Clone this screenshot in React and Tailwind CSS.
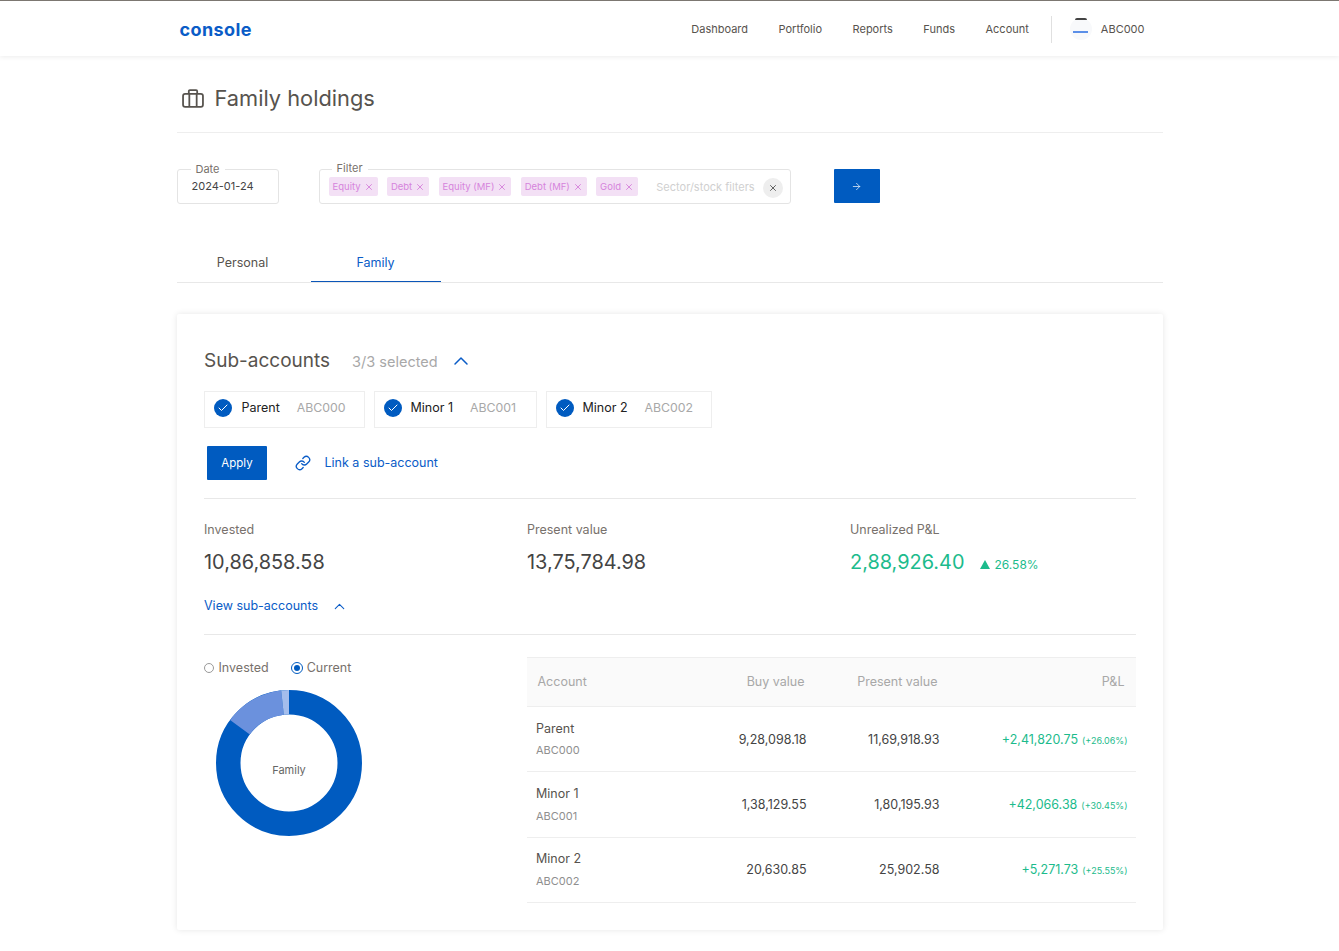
import { ArrowRight, Check, ChevronUp, Link as LinkIcon, X } from "lucide-react";

const navLinks = [
  { label: "Dashboard", cls: "mr-[30.5px]" },
  { label: "Portfolio", cls: "mr-[30.5px]" },
  { label: "Reports", cls: "mr-[30.5px]" },
  { label: "Funds", cls: "mr-[30.5px]" },
  { label: "Account", cls: "" },
];

const filters = ["Equity", "Debt", "Equity (MF)", "Debt (MF)", "Gold"];

const subAccounts = [
  { name: "Parent", id: "ABC000", cls: "w-[161px] mr-[9px]", textCls: "ml-[10px] gap-[17px]" },
  { name: "Minor 1", id: "ABC001", cls: "w-[163px] mr-[9px]", textCls: "ml-[9px] gap-[17px]" },
  { name: "Minor 2", id: "ABC002", cls: "w-[166px]", textCls: "ml-[9px] gap-[17px]" },
];

const rows = [
  { name: "Parent", id: "ABC000", buy: "9,28,098.18", present: "11,69,918.93", pl: "+2,41,820.75", pct: "(+26.06%)" },
  { name: "Minor 1", id: "ABC001", buy: "1,38,129.55", present: "1,80,195.93", pl: "+42,066.38", pct: "(+30.45%)" },
  { name: "Minor 2", id: "ABC002", buy: "20,630.85", present: "25,902.58", pl: "+5,271.73", pct: "(+25.55%)" },
];

const Header = () => (
  <header className="h-[56px] border-t border-[#7c7771] bg-white shadow-[0_1px_5px_rgba(0,0,0,0.08)]">
    <div className="w-[986px] mx-auto h-full flex items-center justify-between">
      <div className="ml-[3px] mt-[2px] text-[#0a5cc7] text-[18px] font-bold tracking-[0.4px] leading-none">console</div>
      <div className="flex items-center mr-[18px] mt-[1px]">
        {navLinks.map((l) => (
          <span key={l.label} className={`text-[11px] text-[#57534e] ${l.cls}`}>
            {l.label}
          </span>
        ))}
        <div className="w-px h-[27px] bg-[#e0e0e0] ml-[22px] mr-[18px]" />
        <div className="relative w-[22px] h-[22px] mr-[9px] rounded-full bg-[#f8f9fb]">
          <div className="absolute left-[5px] top-[0px] w-[12px] h-[2px] rounded-t-full bg-[#444]" />
          <div className="absolute left-[3px] top-[13px] w-[15px] h-[2px] bg-[#5b8fe8]" />
        </div>
        <span className="text-[11px] text-[#57534e]">ABC000</span>
      </div>
    </div>
  </header>
);

const Fieldset = ({ label, cls, labelCls, children }) => (
  <div className={`relative h-[35px] border border-[#e4e4e4] rounded-[3px] ${cls}`}>
    <span className={`absolute bg-white px-[5px] text-[11px] leading-[12px] text-[#78716c] ${labelCls}`}>{label}</span>
    {children}
  </div>
);

const Filters = () => (
  <div className="flex items-start mt-[36px]">
    <Fieldset label="Date" cls="w-[102px] flex items-center pl-[14px]" labelCls="left-[13px] top-[-7px]">
      <span className="text-[11px] text-[#444]">2024-01-24</span>
    </Fieldset>
    <Fieldset label="Filter" cls="w-[472px] ml-[40px] flex items-center pl-[9px]" labelCls="left-[12px] top-[-8px]">
      {filters.map((f) => (
        <span key={f} className="flex items-center h-[19px] mr-[9.3px] px-[4px] gap-[3px] rounded-[2px] bg-[#f3e0f5] text-[9.5px] text-[#d684dc]">
          <span className="pt-[2px]">{f}</span>
          <X size={10} strokeWidth={2.25} />
        </span>
      ))}
      <span className="ml-[9px] pt-[1px] text-[11px] text-[#d0d0d0]">Sector/stock filters</span>
      <span className="absolute right-[7px] top-[8px] w-[20px] h-[20px] rounded-full bg-[#eeeeee] flex items-center justify-center text-[#444]">
        <X size={10} strokeWidth={2} />
      </span>
    </Fieldset>
    <button className="ml-[43px] w-[46px] h-[34px] bg-[#005bc0] rounded-[1px] flex items-center justify-center text-white">
      <ArrowRight size={11} strokeWidth={1.5} />
    </button>
  </div>
);

const Tabs = () => (
  <div className="flex mt-[34px] h-[45px] border-b border-[#e8e8e8]">
    <div className="w-[132px] mr-[2px] pt-[6px] flex items-center justify-center text-[12.5px] text-[#57534e]">Personal</div>
    <div className="w-[130px] pt-[8px] border-b border-[#0b56b8] flex items-center justify-center text-[12.5px] text-[#0a5cc7]">Family</div>
  </div>
);

const SubAccountChip = ({ a }) => (
  <div className={`h-[37px] border border-[#eeeeee] flex items-center pl-[9px] pb-[3px] ${a.cls}`}>
    <span className="w-[18px] h-[18px] rounded-full bg-[#005bc0] flex items-center justify-center text-white">
      <Check size={12} strokeWidth={2} />
    </span>
    <span className={`flex items-center ${a.textCls}`}>
      <span className="text-[12.5px] text-[#222]">{a.name}</span>
      <span className="text-[12.3px] text-[#a8a8a8]">{a.id}</span>
    </span>
  </div>
);

const Stat = ({ label, value, children, valueCls = "text-[#444]" }) => (
  <div className="w-[323px] shrink-0 pl-[0.5px]">
    <div className="text-[12.5px] text-[#78716c] leading-[16px]">{label}</div>
    <div className="flex items-center mt-[12px]">
      <span className={`text-[19.9px] leading-[24px] ${valueCls}`}>{value}</span>
      {children}
    </div>
  </div>
);

const Donut = () => (
  <svg width="146" height="146" viewBox="0 0 146 146" className="block -rotate-90">
    <circle cx="73" cy="73" r="60.75" fill="none" stroke="#005bc0" strokeWidth="24.5" />
    <circle cx="73" cy="73" r="60.75" fill="none" stroke="#6b91dd" strokeWidth="24.5" strokeDasharray="50.4 331.3" strokeDashoffset="-324.1" />
    <circle cx="73" cy="73" r="60.75" fill="none" stroke="#a4bdec" strokeWidth="24.5" strokeDasharray="7.2 374.5" strokeDashoffset="-374.5" />
  </svg>
);

const ChartPanel = () => (
  <div className="w-[323px] shrink-0 pt-[24px]">
    <div className="flex items-center text-[12.5px] text-[#78716c] leading-[18px]">
      <span className="w-[10px] h-[10px] rounded-full border border-[#9a9a9a]" />
      <span className="ml-[5px]">Invested</span>
      <span className="ml-[22px] w-[12px] h-[12px] rounded-full border-[1.5px] border-[#005bc0] flex items-center justify-center">
        <span className="w-[6px] h-[6px] rounded-full bg-[#005bc0]" />
      </span>
      <span className="ml-[4px]">Current</span>
    </div>
    <div className="relative w-[146px] ml-[12px] mt-[13px]">
      <Donut />
      <span className="absolute inset-0 pt-[14px] pl-[1px] flex items-center justify-center text-[11px] text-[#666]">Family</span>
    </div>
  </div>
);

const HoldingsTable = () => (
  <div className="flex-1 pt-[22px]">
    <div className="h-[50px] pt-[1px] bg-[#fafafa] border-t border-b border-[#eeeeee] flex items-center text-[12.5px] text-[#a8a8a8]">
      <span className="w-[145px] pl-[11px]">Account</span>
      <span className="w-[133px] text-right">Buy value</span>
      <span className="w-[133px] text-right">Present value</span>
      <span className="flex-1 text-right pr-[11px]">P&amp;L</span>
    </div>
    {rows.map((r) => (
      <div key={r.name} className="h-[65.3px] border-b border-[#eeeeee] flex items-center text-[12.5px] text-[#444]">
        <div className="w-[145px] pl-[9.5px]">
          <div className="text-[#57534e] leading-[16px]">{r.name}</div>
          <div className="text-[11px] text-[#8f8f8f] leading-[14px] mt-[6.5px]">{r.id}</div>
        </div>
        <span className="w-[135px] pt-[2px] text-right">{r.buy}</span>
        <span className="w-[133px] pt-[2px] text-right">{r.present}</span>
        <span className="flex-1 pt-[2px] flex items-baseline justify-end pr-[8px] text-[#1cbb8c]">
          {r.pl}
          <span className="ml-[4px] text-[9px]">{r.pct}</span>
        </span>
      </div>
    ))}
  </div>
);

const App = () => (
  <div className="min-h-[951px] bg-white font-['Inter',sans-serif]">
    <Header />
    <main className="w-[986px] mx-auto">
      <div className="h-[77px] border-b border-[#eeeeee] flex items-center pl-[5px]">
        <svg width="22" height="19" viewBox="0 0 21 18" fill="none" stroke="#57534e" strokeWidth="1.7" className="mt-[8px]">
          <rect x="1" y="4.5" width="19" height="12.5" rx="2" />
          <path d="M6.5 4.5V2a1 1 0 0 1 1-1h6a1 1 0 0 1 1 1v2.5M7 4.5V17M14 4.5V17" />
        </svg>
        <h1 className="ml-[11px] mt-[9px] text-[21.8px] text-[#57534e] leading-none">Family holdings</h1>
      </div>
      <Filters />
      <Tabs />
      <section className="mt-[31px] h-[616px] bg-white rounded-[2px] shadow-[0_0_6px_rgba(0,0,0,0.1)] px-[27px] pt-[35px]">
        <div className="flex items-center h-[24px]">
          <h2 className="text-[19px] text-[#57534e] leading-none -mt-[2px] pl-[0.5px]">Sub-accounts</h2>
          <span className="ml-[22px] mt-[2px] text-[14.5px] text-[#a8a8a8]">3/3 selected</span>
          <ChevronUp size={24} strokeWidth={1.5} className="ml-[11px] text-[#0a5cc7]" />
        </div>
        <div className="flex mt-[18px]">
          {subAccounts.map((a) => (
            <SubAccountChip key={a.name} a={a} />
          ))}
        </div>
        <div className="flex items-center mt-[18px] pl-[3px]">
          <button className="w-[60px] h-[34px] bg-[#005bc0] text-white text-[11.5px] rounded-[1px] pl-[1px] pt-[1px]">Apply</button>
          <LinkIcon size={16} strokeWidth={2} className="ml-[28px] text-[#0a5cc7]" />
          <span className="ml-[14px] text-[12.5px] text-[#0a5cc7]">Link a sub-account</span>
        </div>
        <div className="h-px bg-[#e8e8e8] mt-[18px]" />
        <div className="flex mt-[23px]">
          <Stat label="Invested" value="10,86,858.58" />
          <Stat label="Present value" value="13,75,784.98" />
          <Stat label="Unrealized P&L" value="2,88,926.40" valueCls="text-[#1cbb8c]">
            <span className="ml-[16px] mt-[5px] w-0 h-0 border-l-[5.5px] border-r-[5.5px] border-b-[9px] border-l-transparent border-r-transparent border-b-[#1cbb8c]" />
            <span className="ml-[4px] mt-[5px] text-[12px] text-[#1cbb8c]">26.58%</span>
          </Stat>
        </div>
        <div className="flex items-center mt-[22px] h-[20px] pl-[0.5px] text-[12.5px] text-[#0a5cc7]">
          View sub-accounts
          <ChevronUp size={17} strokeWidth={1.5} className="ml-[13px]" />
        </div>
        <div className="h-px bg-[#e8e8e8] mt-[18px]" />
        <div className="flex">
          <ChartPanel />
          <HoldingsTable />
        </div>
      </section>
    </main>
  </div>
);

export default App;
